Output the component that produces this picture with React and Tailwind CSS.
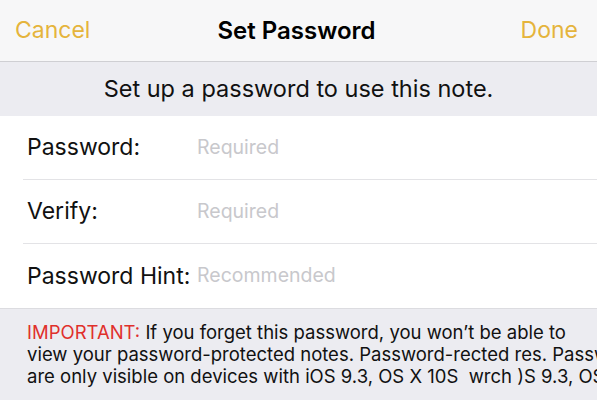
export default function App() {
  const font = { fontFamily: '"Inter", "Liberation Sans", sans-serif' };
  return (
    <div className="w-[597px] h-[403px] overflow-hidden bg-white" style={font}>
      <div className="h-[62px] bg-[#f7f7f8] border-b border-[#cfcfd3] grid grid-cols-[1fr_auto_1fr] items-center pl-[15px] pr-[19px]">
        <span className="text-[23px] text-[#e5b43c] justify-self-start">Cancel</span>
        <span className="text-[24px] font-semibold text-black">Set Password</span>
        <span className="text-[23px] text-[#e5b43c] justify-self-end">Done</span>
      </div>
      <div className="h-[54px] bg-[#ececf1] flex items-center justify-center text-[23.5px] text-[#111]">
        Set up a password to use this note.
      </div>
      <div className="bg-white border-b border-[#dcdce0]">
        {[
          ["Password:", "Required"],
          ["Verify:", "Required"],
          ["Password Hint:", "Recommended"],
        ].map(([l, p], i) => (
          <div key={i} className="pl-[23px]">
            <div className={"h-[64px] flex items-center " + (i < 2 ? "border-b border-[#e3e3e6]" : "")}>
              <span className="w-[174px] pl-[4px] text-[23px] text-[#111] whitespace-nowrap">{l}</span>
              <span className="text-[19.5px] text-[#c8c8cc]">{p}</span>
            </div>
          </div>
        ))}
      </div>
      <div className="h-[91px] bg-[#ececf1] pl-[27px] pt-[12px] text-[18.5px] leading-[22px] text-[#111] whitespace-nowrap overflow-hidden">
        <div><span className="text-[#e0302c]">IMPORTANT:</span> If you forget this password, you won’t be able to</div>
        <div>view your password-protected notes. Password-rected res. Passwords</div>
        <div>are only visible on devices with iOS 9.3, OS X 10S&nbsp; wrch )S 9.3, OS X</div>
      </div>
    </div>
  );
}
